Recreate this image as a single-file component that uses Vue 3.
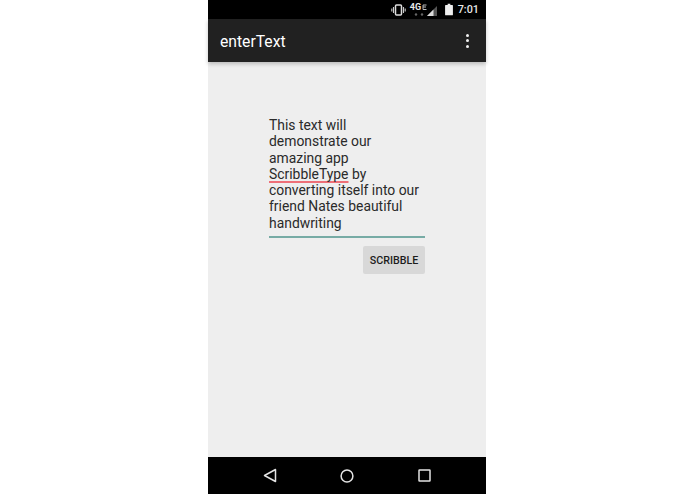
<script setup>
const lines = ['This text will', 'demonstrate our', 'amazing app']
const after = ['converting itself into our', 'friend Nates beautiful', 'handwriting']
</script>

<template>
  <div class="page">
    <div class="phone">
      <div class="status">
        <svg class="vib" width="15" height="12" viewBox="0 0 15 12">
          <rect x="4.5" y="1" width="6" height="10" rx="1" fill="none" stroke="#ddd" stroke-width="1.5"/>
          <path d="M2.5 3v6M0.8 4.5v3M12.5 3v6M14.2 4.5v3" stroke="#ccc" stroke-width="1.1"/>
        </svg>
        <div class="net">
          <span class="lte">4G</span>
          <svg class="lte-e" width="5" height="7" viewBox="0 0 5 7"><path d="M4.5 1H1v2h3M1 3v2.5h3.5" fill="none" stroke="#bbb" stroke-width="1"/></svg>
          <svg class="arrows" width="10" height="3" viewBox="0 0 10 3"><circle cx="2" cy="1.5" r="1.2" fill="#666"/><circle cx="8" cy="1.5" r="1.2" fill="#666"/></svg>
        </div>
        <svg class="signal" width="10" height="10" viewBox="0 0 10 10">
          <path d="M10 0V10H0Z" fill="#555"/>
          <path d="M6.5 3.5V10H0Z" fill="#ddd"/>
        </svg>
        <svg class="batt" width="8" height="13" viewBox="0 0 9 13">
          <path d="M3 0h3v1.300h2.200a.7.7 0 0 1 .7.7v10.300a.7.7 0 0 1-.7.7H.8a.7.7 0 0 1-.7-.7V2a.7.7 0 0 1 .7-.7H3Z" fill="#eee"/>
        </svg>
        <span class="time">7:01</span>
      </div>

      <header class="bar">
        <span class="title">enterText</span>
        <div class="more"><i></i><i></i><i></i></div>
      </header>

      <main class="content">
        <form class="form" @submit.prevent>
          <div class="field">
            <div v-for="l in lines" :key="l">{{ l }}</div>
            <div><span class="misspelt">ScribbleType</span> by</div>
            <div v-for="l in after" :key="l">{{ l }}</div>
          </div>
          <button class="btn" type="button">SCRIBBLE</button>
        </form>
      </main>

      <nav class="nav">
        <svg width="14" height="15" viewBox="0 0 14 15"><path d="M12.5 1.500V13.500L1.500 7.500Z" fill="none" stroke="#e4e4e4" stroke-width="1.5" stroke-linejoin="round"/></svg>
        <svg width="14" height="14" viewBox="0 0 14 14"><circle cx="7" cy="7" r="5.900" fill="none" stroke="#e4e4e4" stroke-width="1.5"/></svg>
        <svg class="square" width="13" height="13" viewBox="0 0 13 13"><rect x="1" y="1" width="11" height="11" rx=".5" fill="none" stroke="#e4e4e4" stroke-width="1.5"/></svg>
      </nav>
    </div>
  </div>
</template>

<style>
html, body { margin: 0; background: #fff; }
</style>

<style scoped>
.page {
  width: 695px;
  height: 494px;
  display: flex;
  padding-left: 208px;
  box-sizing: border-box;
  overflow: hidden;
  font-family: Roboto, "Liberation Sans", sans-serif;
}
.phone {
  width: 278px;
  height: 494px;
  display: flex;
  flex-direction: column;
  background: #eeeeee;
}
.status {
  height: 19px;
  flex: none;
  background: #000;
  display: flex;
  align-items: center;
  justify-content: flex-end;
  padding-right: 7px;
  color: #eee;
}
.vib { margin-right: 4px; }
.net { position: relative; width: 17px; height: 13px; }
.lte {
  position: absolute;
  left: 0;
  top: 0;
  font-size: 9px;
  line-height: 9px;
  font-weight: 700;
  color: #e8e8e8;
}
.lte-e { position: absolute; left: 12px; top: 1px; }
.arrows { position: absolute; left: 4px; top: 10px; }
.signal { margin-right: 8px; margin-top: 2px; }
.batt { margin-right: 5px; }
.time { font-size: 10.8px; font-weight: 500; color: #e8e8e8; line-height: 14px; }
.bar {
  height: 43px;
  flex: none;
  background: #212121;
  display: flex;
  align-items: center;
  justify-content: space-between;
  padding: 0 17px 0 12px;
  box-shadow: 0 2px 4px rgba(0, 0, 0, 0.22);
  position: relative;
}
.title { color: #fff; font-size: 15.7px; font-weight: 400; padding-top: 1px; }
.more { display: flex; flex-direction: column; gap: 2.5px; }
.more i { display: block; width: 3px; height: 3px; border-radius: 50%; background: #f0f0f0; }
.content {
  flex: 1;
  display: flex;
  justify-content: flex-start;
  padding: 55px 0 0 61px;
  box-sizing: border-box;
  min-height: 0;
}
.form {
  width: 156px;
  display: flex;
  flex-direction: column;
  align-items: flex-end;
}
.field {
  width: 100%;
  box-sizing: border-box;
  border-bottom: 2px solid #77aba5;
  font-size: 13.9px;
  line-height: 16.3px;
  color: #2a2a2a;
  padding-bottom: 5px;
  white-space: nowrap;
}
.misspelt {
  text-decoration: underline;
  text-decoration-color: #ee7078;
  text-decoration-thickness: 1.5px;
  text-decoration-skip-ink: none;
  text-underline-offset: 1.5px;
}
.btn {
  margin-top: 8px;
  width: 62px;
  height: 28px;
  border: 0;
  border-radius: 2px;
  padding: 0;
  background: #d8d8d8;
  color: #1c1c1c;
  font-family: inherit;
  font-size: 10.7px;
  font-weight: 500;
}
.nav {
  height: 37px;
  flex: none;
  background: #000;
  display: flex;
  align-items: center;
  padding-left: 55px;
  gap: 63px;
}
.square { margin-left: 1px; }
</style>
